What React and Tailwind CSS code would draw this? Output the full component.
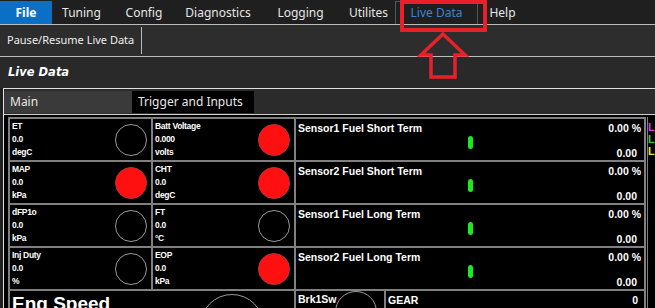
import React from "react";

const MENU = [
  { label: "File", w: "w-[52px]" },
  { label: "Tuning", w: "w-[59px]" },
  { label: "Config", w: "w-[66px]" },
  { label: "Diagnostics", w: "w-[82px]" },
  { label: "Logging", w: "w-[83px]" },
  { label: "Utilites", w: "w-[53px]" },
  { label: "Live Data", w: "w-[83px]" },
  { label: "Help", w: "w-[49px]" },
];

const SMALL = [
  { name: "ET", val: "0.0", unit: "degC", lit: false },
  { name: "Batt Voltage", val: "0.000", unit: "volts", lit: true },
  { name: "MAP", val: "0.0", unit: "kPa", lit: true },
  { name: "CHT", val: "0.0", unit: "degC", lit: true },
  { name: "dFP1o", val: "0.0", unit: "kPa", lit: false },
  { name: "FT", val: "0.0", unit: "°C", lit: false },
  { name: "Inj Duty", val: "0.0", unit: "%", lit: false },
  { name: "EOP", val: "0.0", unit: "kPa", lit: true },
];

const BARS = [
  "Sensor1 Fuel Short Term",
  "Sensor2 Fuel Short Term",
  "Sensor1 Fuel Long Term",
  "Sensor2 Fuel Long Term",
];

function Indicator({ g }) {
  return (
    <div className="bg-black h-[41px] flex items-center justify-between pl-[2px] pr-[4px]">
      <div className="flex flex-col text-white font-bold text-[8.5px] leading-[13px] tracking-[-0.3px] [font-family:'Liberation_Sans',sans-serif]">
        <span>{g.name}</span>
        <span>{g.val}</span>
        <span>{g.unit}</span>
      </div>
      <div
        className={
          g.lit
            ? "w-[32px] h-[32px] rounded-full bg-[#ff1010] border border-[#b33]"
            : "w-[32px] h-[32px] rounded-full border border-[#9a9a9a]"
        }
      />
    </div>
  );
}

function Bar({ name }) {
  return (
    <div className="bg-black h-[41px] flex flex-col px-[2px] pt-[4px] text-white font-bold text-[10.5px] [font-family:'Liberation_Sans',sans-serif] leading-none">
      <div className="flex justify-between pr-[1px]">
        <span>{name}</span>
        <span>0.00 %</span>
      </div>
      <div className="w-[5px] h-[13px] rounded-full bg-[#1ee81e] ml-[170px] mt-[2px]" />
      <div className="text-right pr-[5px] -mt-[1px]">0.00</div>
    </div>
  );
}

export default function App() {
  return (
    <div className="w-[655px] h-[308px] overflow-hidden bg-[#1f1f1f] relative [font-family:'Noto_Sans',sans-serif]">
      {/* menu */}
      <div className="h-[25px] flex items-end border-b border-[#bcbcbc]">
        {MENU.map((m) => (
          <div
            key={m.label}
            className={`${m.w} h-[23px] flex items-center justify-center text-[12px] ${
              m.label === "File"
                ? "bg-[#0b6fc6] text-white font-bold"
                : m.label === "Live Data"
                ? "text-[#3a86d4] border border-[#555] border-b-0"
                : "text-[#e6e6e6]"
            }`}
          >
            {m.label}
          </div>
        ))}
      </div>

      {/* toolbar */}
      <div className="h-[32px] bg-[#2d2d2d] flex items-center border-b border-[#bcbcbc]">
        <div className="h-[27px] flex items-center px-[7px] border-r border-[#bcbcbc] text-[11px] text-[#ededed]">
          Pause/Resume Live Data
        </div>
      </div>

      {/* header */}
      <div className="h-[31px] bg-[#292929] flex items-center px-[8px] text-white text-[11.5px] font-bold italic [font-family:'DejaVu_Sans',sans-serif]">
        Live Data
      </div>

      {/* panel */}
      <div className="ml-[3px] border-l border-t border-[#e0e0e0] bg-[#2b2b2b] h-[220px]">
        <div className="flex h-[22px] mt-[2px] text-[12px]">
          <div className="w-[128px] bg-[#3a3a3a] text-[#e8e8e8] pl-[6px] flex items-center">Main</div>
          <div className="w-[122px] bg-black text-[#e8e8e8] pl-[6px] flex items-center">Trigger and Inputs</div>
        </div>
        <div className="h-[3px] border-t border-[#cfcfcf] mt-[1px] bg-black" />
        <div className="flex bg-black">
          <div className="ml-[4px] w-[638px] bg-[#808080] p-[2px] grid grid-cols-[141px_141px_1fr] gap-[2px]">
            <div className="col-span-2 grid grid-cols-2 gap-[2px]">
              {SMALL.map((g) => (
                <Indicator key={g.name} g={g} />
              ))}
            </div>
            <div className="flex flex-col gap-[2px]">
              {BARS.map((b) => (
                <Bar key={b} name={b} />
              ))}
            </div>
            <div className="col-span-2 bg-black h-[60px] flex items-start justify-between pl-[2px] pr-[18px] pt-[3px]">
              <span className="text-white font-bold text-[19px] leading-none [font-family:'Liberation_Sans',sans-serif]">
                Eng Speed
              </span>
              <div className="w-[64px] h-[64px] rounded-full border border-[#9a9a9a] mr-[12px]" />
            </div>
            <div className="flex gap-[2px]">
              <div className="w-[88px] bg-black h-[60px] flex items-start px-[2px] pt-[3px] text-white font-bold text-[10.5px] leading-none [font-family:'Liberation_Sans',sans-serif]">
                <span>Brk1Sw</span>
                <div className="w-[42px] h-[42px] rounded-full border border-[#9a9a9a] -ml-[2px] -mt-[3px] shrink-0" />
              </div>
              <div className="flex-1 bg-black h-[60px] flex flex-col px-[2px] pt-[4px] text-white font-bold text-[10.5px] leading-none [font-family:'Liberation_Sans',sans-serif]">
                <div className="flex justify-between pr-[4px]">
                  <span>GEAR</span>
                  <span>0</span>
                </div>
                <div className="w-[6px] h-[10px] rounded-full bg-[#1ee81e] ml-[128px] mt-[4px]" />
              </div>
            </div>
          </div>
          <div className="ml-[1px] flex-1 border-l border-[#808080] flex flex-col pt-[4px] text-[11px] font-bold leading-[12px] [font-family:'Liberation_Sans',sans-serif]">
            <span className="text-[#d040e0]">L</span>
            <span className="text-[#30d030]">L</span>
            <span className="text-[#e8e040]">L</span>
          </div>
        </div>
      </div>

      {/* annotation */}
      <div className="absolute left-[400px] top-0 w-[87px] h-[32px] border-[4px] border-[#e8202a]" />
      <svg className="absolute left-[414px] top-[31px]" width="58" height="50" viewBox="0 0 58 50">
        <path d="M29 3 L51 24 L41 24 L41 46 L17 46 L17 24 L7 24 Z" fill="none" stroke="#e8202a" strokeWidth="3.5" strokeLinejoin="miter" />
      </svg>
    </div>
  );
}
